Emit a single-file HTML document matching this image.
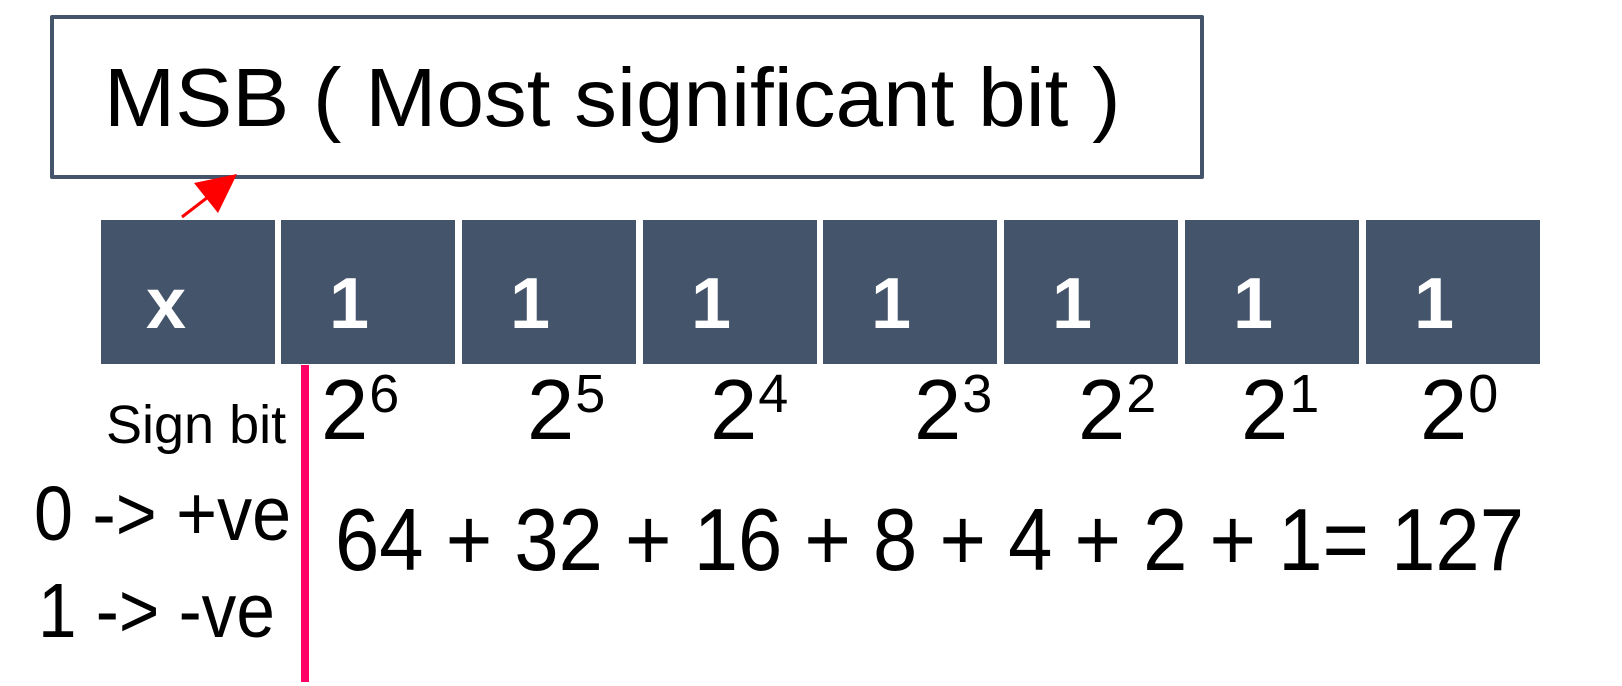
<!DOCTYPE html>
<html><head><meta charset="utf-8"><style>
html,body{margin:0;padding:0;background:#fff;width:1622px;height:686px;overflow:hidden;position:relative;font-family:"Liberation Sans",sans-serif;color:#000}
.a{position:absolute;white-space:nowrap;line-height:1;transform-origin:left}
.box{position:absolute;left:50px;top:15px;width:1146px;height:156px;border:4px solid #44546a;border-radius:2px}
.cell{position:absolute;top:220px;width:174px;height:144px;background:#44546a}
.d{position:absolute;color:#fff;font-weight:bold;font-size:72px;line-height:1}
.p{position:absolute;font-size:85px;line-height:1;top:368px}
.p sup{font-size:54px;position:relative;top:-1px;vertical-align:top;margin-left:1px}
</style></head><body>
<div class="box"></div>
<div class="a" style="left:104px;top:56px;font-size:83px;transform:scaleX(1.03)">MSB ( Most significant bit )</div>
<svg style="position:absolute;left:0;top:0" width="1622" height="686">
<line x1="182" y1="217" x2="208" y2="197" stroke="#ff0000" stroke-width="3"/>
<polygon points="237,174 194,183 218,213" fill="#ff0000"/>
<rect x="301" y="365" width="8" height="317" fill="#ff0066"/>
</svg>
<div class="cell" style="left:101px"><div class="d" style="left:45px;top:48px">x</div></div>
<div class="cell" style="left:281px"><div class="d" style="left:48px;top:48px">1</div></div>
<div class="cell" style="left:462px"><div class="d" style="left:48px;top:48px">1</div></div>
<div class="cell" style="left:643px"><div class="d" style="left:48px;top:48px">1</div></div>
<div class="cell" style="left:823px"><div class="d" style="left:48px;top:48px">1</div></div>
<div class="cell" style="left:1004px"><div class="d" style="left:48px;top:48px">1</div></div>
<div class="cell" style="left:1185px"><div class="d" style="left:48px;top:48px">1</div></div>
<div class="cell" style="left:1366px"><div class="d" style="left:48px;top:48px">1</div></div>
<div class="p" style="left:321px">2<sup>6</sup></div>
<div class="p" style="left:527px">2<sup>5</sup></div>
<div class="p" style="left:710px">2<sup>4</sup></div>
<div class="p" style="left:914px">2<sup>3</sup></div>
<div class="p" style="left:1078px">2<sup>2</sup></div>
<div class="p" style="left:1241px">2<sup>1</sup></div>
<div class="p" style="left:1420px">2<sup>0</sup></div>
<div class="a" style="left:106px;top:398px;font-size:54px">Sign bit</div>
<div class="a" style="left:34px;top:476px;font-size:77px;transform:scaleX(0.91)">0 -&gt; +ve</div>
<div class="a" style="left:38px;top:573px;font-size:77px;transform:scaleX(0.9)">1 -&gt; -ve</div>
<div class="a" style="left:335px;top:496px;font-size:88px;transform:scaleX(0.905)">64 + 32 + 16 + 8 + 4 + 2 + 1= 127</div>
</body></html>
